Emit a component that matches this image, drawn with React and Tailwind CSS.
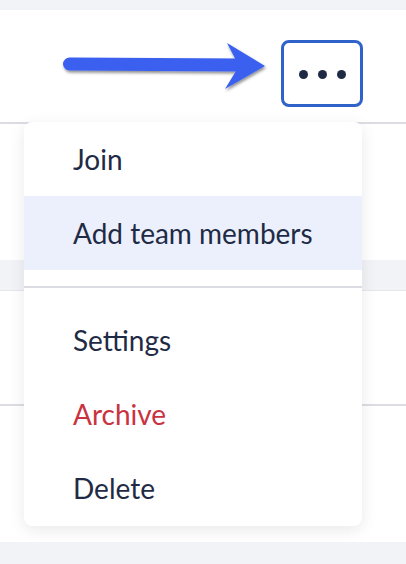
import React from "react";

function Arrow() {
  return (
    <svg
      className="absolute left-[55px] top-[35px]"
      width="220"
      height="65"
      viewBox="0 0 220 65"
    >
      <defs>
        <filter id="sh" x="-10%" y="-30%" width="130%" height="170%">
          <feDropShadow dx="1" dy="2" stdDeviation="1.6" floodColor="#000" floodOpacity="0.45" />
        </filter>
      </defs>
      <g filter="url(#sh)" fill="#3a61ef">
        <line x1="14.5" y1="29" x2="186" y2="30" stroke="#3a61ef" strokeWidth="13" strokeLinecap="round" />
        <path d="M172 8 L210 31 L170 54 L184 31 Z" />
      </g>
    </svg>
  );
}

function Item({ children, active, red }) {
  return (
    <div
      className={
        "h-[74px] flex items-center pl-[49px] text-[28px] leading-none " +
        (active ? "bg-[#ebf0fc] " : "") +
        (red ? "text-[#c9333f]" : "text-[#1f2b45]")
      }
    >
      {children}
    </div>
  );
}

export default function App() {
  return (
    <div
      className="relative w-[406px] h-[564px] overflow-hidden bg-[#f2f3f6]"
      style={{ fontFamily: "Lato, 'Open Sans', sans-serif" }}
    >
      <div className="h-[10px] bg-[#f2f3f6]" />
      <div className="h-[114px] bg-white border-b-2 border-[#dcdde3] flex justify-end items-start pt-[30px] pr-[43px]">
        <button className="w-[82px] h-[67px] rounded-[8px] border-[3px] border-[#2f63c9] bg-white flex items-center justify-center gap-[10px] pt-[1px]">
          <span className="w-[9px] h-[9px] rounded-full bg-[#1f2b45]" />
          <span className="w-[9px] h-[9px] rounded-full bg-[#1f2b45]" />
          <span className="w-[9px] h-[9px] rounded-full bg-[#1f2b45]" />
        </button>
      </div>
      <div className="h-[136px] bg-white" />
      <div className="h-[31px] bg-[#f2f3f6] border-b border-[#e6e7eb]" />
      <div className="h-[115px] bg-white border-b-2 border-[#dcdde3]" />
      <div className="h-[136px] bg-white" />
      <div className="h-[22px] bg-[#f2f3f6]" />

      <Arrow />

      <div className="absolute left-[24px] top-[122px] w-[338px] h-[404px] bg-white rounded-[8px] shadow-[0_4px_16px_rgba(0,0,0,0.09)] overflow-hidden">
        <Item>Join</Item>
        <Item active>Add team members</Item>
        <div className="mt-[16px] h-[2px] bg-[#dcdde3]" />
        <div className="mt-[15px]">
          <Item>Settings</Item>
          <Item red>Archive</Item>
          <Item>Delete</Item>
        </div>
      </div>
    </div>
  );
}
